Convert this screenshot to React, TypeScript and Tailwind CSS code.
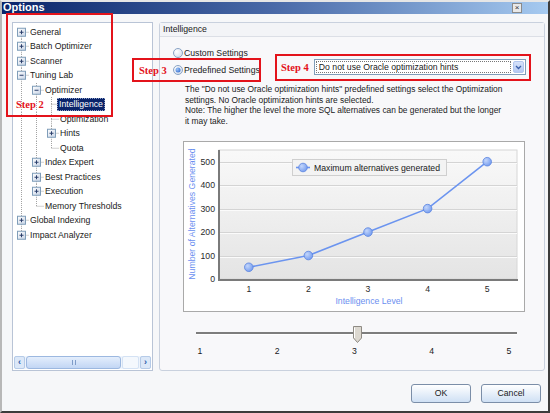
import React from "react";

type TreeNode = {
  label: string;
  level: number;
  toggle?: "plus" | "minus";
  first?: boolean;
  last?: boolean;
  guides: boolean[];
  selected?: boolean;
};

const tree: TreeNode[] = [
  { label: "General", level: 0, toggle: "plus", first: true, guides: [] },
  { label: "Batch Optimizer", level: 0, toggle: "plus", guides: [] },
  { label: "Scanner", level: 0, toggle: "plus", guides: [] },
  { label: "Tuning Lab", level: 0, toggle: "minus", guides: [] },
  { label: "Optimizer", level: 1, toggle: "minus", guides: [true] },
  { label: "Intelligence", level: 2, selected: true, guides: [true, true] },
  { label: "Optimization", level: 2, guides: [true, true] },
  { label: "Hints", level: 2, toggle: "plus", guides: [true, true] },
  { label: "Quota", level: 2, last: true, guides: [true, true] },
  { label: "Index Expert", level: 1, toggle: "plus", guides: [true] },
  { label: "Best Practices", level: 1, toggle: "plus", guides: [true] },
  { label: "Execution", level: 1, toggle: "plus", guides: [true] },
  { label: "Memory Thresholds", level: 1, last: true, guides: [true] },
  { label: "Global Indexing", level: 0, toggle: "plus", guides: [] },
  { label: "Impact Analyzer", level: 0, toggle: "plus", last: true, guides: [] },
];

const ROW = 14.5;
const MID = ROW / 2;
const dot = { stroke: "#a3a3a3", strokeWidth: 1, strokeDasharray: "1 1" };

function GuideCell({ on }: { on: boolean }) {
  return (
    <svg width={15} height={ROW} className="block shrink-0">
      {on ? <line x1={7.5} y1={0} x2={7.5} y2={ROW} {...dot} /> : null}
    </svg>
  );
}

function OwnCell({ node }: { node: TreeNode }) {
  return (
    <svg width={15} height={ROW} className="block shrink-0">
      {!node.first ? <line x1={7.5} y1={0} x2={7.5} y2={MID} {...dot} /> : null}
      {!node.last ? <line x1={7.5} y1={MID} x2={7.5} y2={ROW} {...dot} /> : null}
      <line x1={7.5} y1={MID} x2={15} y2={MID} {...dot} />
      {node.toggle ? (
        <g>
          <defs>
            <linearGradient id="tbox" x1="0" y1="0" x2="1" y2="1">
              <stop offset="0" stopColor="#ffffff" />
              <stop offset="1" stopColor="#c8d4e6" />
            </linearGradient>
          </defs>
          <rect x={3.5} y={3.25} width={8} height={8} fill="url(#tbox)" stroke="#7f9db9" />
          <line x1={5.5} y1={7.25} x2={9.5} y2={7.25} stroke="#2b3f6b" />
          {node.toggle === "plus" ? <line x1={7.5} y1={5.25} x2={7.5} y2={9.25} stroke="#2b3f6b" /> : null}
        </g>
      ) : null}
    </svg>
  );
}

function TreeRow({ node }: { node: TreeNode }) {
  return (
    <div className="flex items-center" style={{ height: ROW }}>
      {node.guides.map((g, i) => (
        <GuideCell key={i} on={g} />
      ))}
      <OwnCell node={node} />
      {node.selected ? (
        <span className="ml-[-2px] flex h-[13px] items-center border border-dotted border-[#8da0c8] bg-[#0a246a] px-[1px] text-white">
          {node.label}
        </span>
      ) : (
        <span className="ml-[1px] whitespace-nowrap text-[#1a1a1a]">{node.label}</span>
      )}
    </div>
  );
}

function Radio({ checked }: { checked?: boolean }) {
  return (
    <svg width={10} height={10} className="block shrink-0">
      <defs>
        <radialGradient id="rbg" cx="0.35" cy="0.35" r="0.8">
          <stop offset="0" stopColor="#ffffff" />
          <stop offset="1" stopColor="#cfdaea" />
        </radialGradient>
        <radialGradient id="rdot" cx="0.35" cy="0.35" r="0.8">
          <stop offset="0" stopColor="#9fc4f4" />
          <stop offset="1" stopColor="#2f6ad0" />
        </radialGradient>
      </defs>
      <circle cx={5} cy={5} r={4.5} fill="url(#rbg)" stroke="#8aa3c4" />
      {checked ? <circle cx={5} cy={5} r={2.5} fill="url(#rdot)" /> : null}
    </svg>
  );
}

const points = [
  { x: 64.8, v: 50 },
  { x: 124.4, v: 100 },
  { x: 184, v: 200 },
  { x: 243.6, v: 300 },
  { x: 303.2, v: 500 },
];
const yOf = (v: number) => 137 - v * 0.2346;

function Chart() {
  const line = points.map((p) => `${p.x},${yOf(p.v)}`).join(" ");
  return (
    <svg width={340} height={169} className="block" fontFamily="'Liberation Sans', Arial, sans-serif" fontSize={8.7}>
      <defs>
        <linearGradient id="plot" x1="0" y1="0" x2="0" y2="1">
          <stop offset="0" stopColor="#f9f9f9" />
          <stop offset="1" stopColor="#e4e4e4" />
        </linearGradient>
        <radialGradient id="pt" cx="0.35" cy="0.35" r="0.75">
          <stop offset="0" stopColor="#c3d6fb" />
          <stop offset="1" stopColor="#6f98ee" />
        </radialGradient>
      </defs>
      <rect x={35} y={8} width={298} height={129} fill="url(#plot)" stroke="#d6d6d6" />
      {[100, 200, 300, 400, 500].map((v) => (
        <g key={v}>
          <line x1={36} x2={333} y1={Math.round(yOf(v)) + 0.5} y2={Math.round(yOf(v)) + 0.5} stroke="#d4d4d4" />
          <line x1={36} x2={333} y1={Math.round(yOf(v)) + 1.5} y2={Math.round(yOf(v)) + 1.5} stroke="#fbfbfb" />
        </g>
      ))}
      <line x1={35} y1={8} x2={35} y2={139} stroke="#7a7a7a" strokeWidth={2} />
      <line x1={34} y1={138} x2={334} y2={138} stroke="#7a7a7a" strokeWidth={2} />
      {[0, 100, 200, 300, 400, 500].map((v) => (
        <text key={v} x={31} y={yOf(v) + 3} textAnchor="end" fill="#2a2a2a">
          {v}
        </text>
      ))}
      {points.map((p, i) => (
        <text key={i} x={p.x} y={150} textAnchor="middle" fill="#2a2a2a">
          {i + 1}
        </text>
      ))}
      <text x={185} y={162} textAnchor="middle" fill="#6b8ff0">
        Intelligence Level
      </text>
      <text transform="translate(11,72) rotate(-90)" textAnchor="middle" fill="#6b8ff0">
        Number of Alternatives Generated
      </text>
      <polyline points={line} fill="none" stroke="#6b94ef" strokeWidth={1.6} />
      {points.map((p, i) => (
        <circle key={i} cx={p.x} cy={yOf(p.v)} r={4.3} fill="url(#pt)" stroke="#5b84e0" strokeWidth={0.8} />
      ))}
      <rect x={108.5} y={17.5} width={154} height={16} fill="#f3f3f3" stroke="#cfcfcf" />
      <line x1={112} y1={25.5} x2={126} y2={25.5} stroke="#6b94ef" strokeWidth={1.6} />
      <circle cx={119} cy={25.5} r={4.3} fill="url(#pt)" stroke="#5b84e0" strokeWidth={0.8} />
      <text x={130} y={28.5} fill="#1a1a1a">
        Maximum alternatives generated
      </text>
    </svg>
  );
}

function StepBox({ className, label, textClass }: { className: string; label: string; textClass: string }) {
  return (
    <div className={`pointer-events-none absolute border-2 border-[#e3131b] ${className}`}>
      <span className={`absolute font-['Liberation_Serif',serif] text-[10.5px] font-bold leading-none text-[#e3131b] ${textClass}`}>
        {label}
      </span>
    </div>
  );
}

function DialogButton({ children }: { children: React.ReactNode }) {
  return (
    <button
      type="button"
      className="flex h-[19px] w-[60px] items-center justify-center rounded-[3px] border border-[#7b8ea8] bg-gradient-to-b from-[#ffffff] to-[#cfe0f4] text-[#1a1a1a]"
    >
      {children}
    </button>
  );
}

export default function App() {
  return (
    <div className="relative flex h-[413px] w-[550px] flex-col overflow-hidden border-b-2 border-l-2 border-r-2 border-t-2 border-b-[#3c3c3c] border-l-[#b8b8b8] border-r-[#3c3c3c] border-t-[#e6e6e6] bg-[#f6f7f9] font-['Liberation_Sans',Arial,sans-serif] text-[8.7px] leading-none">
      {/* title bar */}
      <div className="flex h-[12px] shrink-0 items-start justify-between overflow-hidden bg-gradient-to-r from-[#0a246a] via-[#4a6aa8] to-[#a6caf0]">
        <span className="mt-[-1px] pl-[1px] text-[11px] font-bold leading-[12px] text-white">Options</span>
        <span className="mr-[26px] mt-[1px] flex h-[10px] w-[10px] items-center justify-center border border-[#8a8a8a] bg-[#e8e8e8] text-[8px] leading-none text-[#333]">
          ×
        </span>
      </div>

      <div className="flex flex-1 flex-col pl-[10px] pt-[8px]">
        <div className="flex h-[349px] gap-[6px]">
          {/* tree */}
          <div className="flex w-[141px] flex-col border border-[#b9c4d6] bg-white p-[1px]">
            <div className="flex-1 pt-[0.75px]">
              {tree.map((n) => (
                <TreeRow key={n.label} node={n} />
              ))}
            </div>
            <div className="flex h-[13px] items-stretch gap-[1px] rounded-[2px] bg-[#eef4fc]">
              <div className="flex w-[11px] items-center justify-center rounded-[2px] border border-[#b6cbe8] bg-[#dce8f8] text-[9px] font-bold text-[#2c5aa8]">
                ‹
              </div>
              <div className="flex w-[95px] items-center justify-center rounded-[3px] border border-[#9cb8e0] bg-gradient-to-b from-[#e4eefc] to-[#c2d6f4]">
                <span className="h-[5px] w-[4px] border-x border-[#7f9cc8]" />
              </div>
              <div className="flex-1 rounded-[2px] border border-[#d4e2f4] bg-[#f4f8fd]" />
              <div className="flex w-[11px] items-center justify-center rounded-[2px] border border-[#b6cbe8] bg-[#dce8f8] text-[9px] font-bold text-[#2c5aa8]">
                ›
              </div>
            </div>
          </div>

          {/* group box */}
          <div className="flex w-[386px] flex-col rounded-[3px] border border-[#c9d1de] bg-[#f8f8fa]">
            <div className="flex h-[14px] shrink-0 items-center border-b border-[#dcdfe6] bg-[#f3f4f7] pl-[3px] text-[#1a1a1a]">
              Intelligence
            </div>
            <div className="mt-[10px] flex h-[12px] items-center pl-[13px]">
              <Radio />
              <span className="ml-[1px] text-[#1a1a1a]">Custom Settings</span>
            </div>
            <div className="flex h-[17px] items-start pl-[13px]">
              <div className="mt-[6px] flex items-center">
                <Radio checked />
                <span className="ml-[1px] text-[#1a1a1a]">Predefined Settings</span>
              </div>
              <div className="ml-[54px] flex h-[16px] w-[212px] items-center border border-[#7f9db9] bg-white p-[1px]">
                <div className="flex h-full flex-1 items-center border border-dotted border-[#777] pl-[2px] text-[#1a1a1a]">
                  Do not use Oracle optimization hints
                </div>
                <div className="ml-[2px] flex h-[12px] w-[11px] items-center justify-center rounded-[2px] border border-[#b2c6ee] bg-gradient-to-b from-[#d6e2fa] to-[#b4c8f2]">
                  <svg width={7} height={5}>
                    <path d="M1 1 L3.5 3.5 L6 1" fill="none" stroke="#3a5ea8" strokeWidth={1.3} />
                  </svg>
                </div>
              </div>
            </div>
            <div className="mt-[8px] pl-[25px] text-[8.4px] leading-[10.5px] whitespace-nowrap text-[#1a1a1a]">
              <div>The "Do not use Oracle optimization hints" predefined settings select the Optimization</div>
              <div>settings. No Oracle optimization hints are selected.</div>
              <div>Note: The higher the level the more SQL alternatives can be generated but the longer</div>
              <div>it may take.</div>
            </div>
            <div className="ml-[23px] mt-[15px] w-[342px] border border-[#a9a9a9] bg-white">
              <Chart />
            </div>
            <div className="relative ml-[36px] mt-[20px] h-[3px] w-[321px] border-b border-white bg-[#7d7d7d]">
              <svg width={9} height={17} className="absolute left-[157px] top-[-6px]">
                <path d="M0.5 0.5 H8.5 V12 L4.5 16.5 L0.5 12 Z" fill="#dcd8d0" stroke="#8f8b84" />
                <line x1={1.5} y1={1.5} x2={1.5} y2={12} stroke="#ffffff" />
              </svg>
            </div>
            <div className="ml-[37px] mt-[11px] flex w-[315px] justify-between leading-[11px] text-[#1a1a1a]">
              {["1", "2", "3", "4", "5"].map((l) => (
                <span key={l} className="w-[6px] text-center">
                  {l}
                </span>
              ))}
            </div>
          </div>
        </div>

        <div className="mt-[13px] flex justify-end gap-[10px] pr-[7px]">
          <DialogButton>OK</DialogButton>
          <DialogButton>Cancel</DialogButton>
        </div>
      </div>

      <StepBox className="left-[4px] top-[11px] h-[104px] w-[107px]" label="Step 2" textClass="left-[8px] top-[85px]" />
      <StepBox className="left-[130px] top-[56px] h-[24px] w-[129px]" label="Step 3" textClass="left-[5px] top-[6px]" />
      <StepBox className="left-[273px] top-[52px] h-[27px] w-[256px]" label="Step 4" textClass="left-[4px] top-[7px]" />
    </div>
  );
}
